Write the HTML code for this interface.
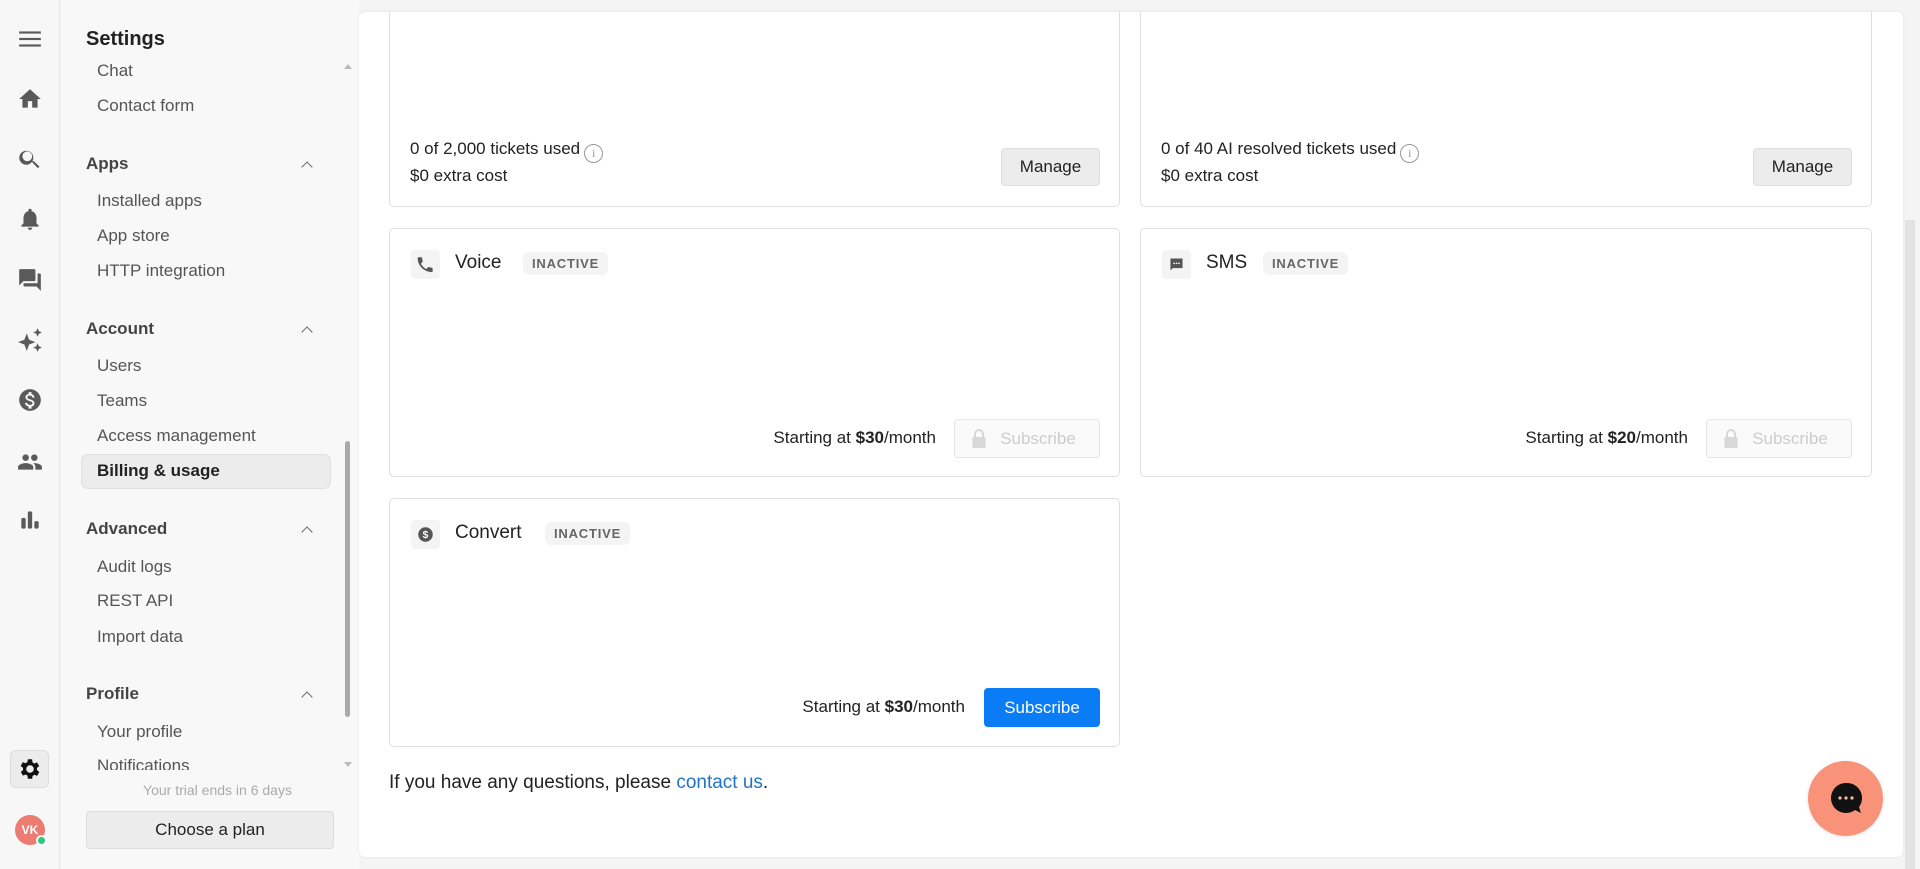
<!DOCTYPE html>
<html><head><meta charset="utf-8"><style>
*{box-sizing:border-box;margin:0;padding:0}
body{width:1920px;height:869px;overflow:hidden;background:#f4f4f4;font-family:"Liberation Sans",sans-serif;color:#222;position:relative}
.rail{position:absolute;left:0;top:0;width:60px;height:869px;background:#f7f7f7;border-right:1px solid #e6e6e6}
.rail svg{position:absolute;left:17px;width:26px;height:26px;fill:#5a5a5a}
.side{position:absolute;left:61px;top:0;width:298px;height:869px;background:#f8f8f8}
.side .t{position:absolute;font-size:17px;color:#555}
.side .h{position:absolute;left:86px;font-size:17px;font-weight:bold;color:#444}
.side .car{position:absolute;left:300px;width:8px;height:8px;border-left:1.6px solid #666;border-top:1.6px solid #666;transform:rotate(45deg)}
.main{position:absolute;left:359px;top:12px;width:1544px;height:845px;background:#fff;border-radius:6px;box-shadow:0 0 3px rgba(0,0,0,.08);overflow:hidden}
.card{position:absolute;background:#fff;border:1px solid #e0e0e0;border-radius:5px}
.txt{position:absolute;font-size:17px;color:#222}
.btn{position:absolute;border-radius:4px;font-size:17px;text-align:center}
.manage{background:#ececec;border:1px solid #dedede;color:#222;width:99px;height:38px;line-height:36px}
.dis{background:#fafafa;border:1px solid #e6e6e6;color:#ccc;width:146px;height:39px;line-height:37px;padding-left:22px}
.blue{background:#0a7cf5;color:#fff;width:116px;height:39px;line-height:39px}
.ibox{position:absolute;width:29px;height:29px;background:#f4f4f4;border-radius:4px}
.badge{position:absolute;background:#f4f4f4;border-radius:6px;font-size:13px;font-weight:bold;letter-spacing:.8px;color:#666;padding:4px 9px}
.name{position:absolute;font-size:19px;color:#222}
.info{display:inline-block;width:19px;height:19px;border:1.5px solid #999;border-radius:50%;font-size:12px;color:#999;text-align:center;line-height:16px;vertical-align:-3px;margin-left:4px;font-family:"Liberation Serif",serif}
</style></head><body>
<div class="rail">
<svg style="top:26px" viewBox="0 0 24 24"><rect x="2" y="5" width="20" height="2"/><rect x="2" y="11" width="20" height="2"/><rect x="2" y="17" width="20" height="2"/></svg>
<svg style="top:86px" viewBox="0 0 24 24"><path d="M12 3 2 12h3v8h5v-6h4v6h5v-8h3z"/></svg>
<svg style="top:146px" viewBox="0 0 24 24"><path d="M15.5 14h-.8l-.3-.3A6.5 6.5 0 1 0 14 14.4l.3.3v.8l5 5 1.5-1.5zm-6 0a4.5 4.5 0 1 1 0-9 4.5 4.5 0 0 1 0 9z"/></svg>
<svg style="top:206px" viewBox="0 0 24 24"><path d="M12 22a2 2 0 0 0 2-2h-4a2 2 0 0 0 2 2zm6-6v-5c0-3-1.6-5.6-4.5-6.3V4a1.5 1.5 0 0 0-3 0v.7C7.6 5.4 6 8 6 11v5l-2 2v1h16v-1z"/></svg>
<svg style="top:267px" viewBox="0 0 24 24"><path d="M21 6h-2v9H6v2c0 .6.4 1 1 1h11l4 4V7c0-.6-.4-1-1-1zm-4 6V3c0-.6-.4-1-1-1H3c-.6 0-1 .4-1 1v14l4-4h10c.6 0 1-.4 1-1z"/></svg>
<svg style="top:327px" viewBox="0 0 24 24"><path d="M9 6l2.2 5.8L17 14l-5.8 2.2L9 22l-2.2-5.8L1 14l5.8-2.2zM19 1l1.2 2.8L23 5l-2.8 1.2L19 9l-1.2-2.8L15 5l2.8-1.2zM19 15l1.2 2.8L23 19l-2.8 1.2L19 23l-1.2-2.8L15 19l2.8-1.2z"/></svg>
<svg style="top:387px" viewBox="0 0 24 24"><path d="M12 2a10 10 0 1 0 0 20 10 10 0 0 0 0-20zm1.4 16.1V20h-2.7v-1.9c-1.7-.4-3.2-1.5-3.3-3.4h2c.1 1 .8 1.8 2.6 1.8 1.9 0 2.3-1 2.3-1.5 0-.8-.4-1.5-2.5-2-2.4-.6-4-1.6-4-3.5 0-1.6 1.3-2.7 2.9-3V4.7h2.7v1.9c1.8.4 2.7 1.8 2.7 3.2h-2c-.1-1.1-.6-1.8-2.2-1.8-1.5 0-2.3.7-2.3 1.6 0 .8.6 1.3 2.5 1.8s4 1.3 4 3.7c0 1.7-1.3 2.7-2.7 3z"/></svg>
<svg style="top:449px" viewBox="0 0 24 24"><path d="M16 11a3 3 0 1 0 0-6 3 3 0 0 0 0 6zm-8 0a3 3 0 1 0 0-6 3 3 0 0 0 0 6zm0 2c-2.3 0-7 1.2-7 3.5V19h14v-2.5C15 14.2 10.3 13 8 13zm8 0h-1c1.2.8 2 2 2 3.5V19h6v-2.5c0-2.3-4.7-3.5-7-3.5z"/></svg>
<svg style="top:507px" viewBox="0 0 24 24"><rect x="4" y="10" width="4" height="10" rx="1.5"/><rect x="10" y="4" width="4" height="16" rx="1.5"/><rect x="16" y="13" width="4" height="7" rx="1.5"/></svg>
<div style="position:absolute;left:10px;top:750px;width:39px;height:38px;background:#ececec;border:1px solid #ddd;border-radius:6px"></div>
<svg style="top:756px;fill:#111" viewBox="0 0 24 24"><path d="M19.4 13a7.5 7.5 0 0 0 0-2l2.1-1.6-2-3.5-2.5 1a7.3 7.3 0 0 0-1.7-1L15 3h-4l-.4 2.7a7.3 7.3 0 0 0-1.7 1l-2.5-1-2 3.5L6.6 11a7.5 7.5 0 0 0 0 2l-2.1 1.6 2 3.5 2.5-1c.5.4 1.1.7 1.7 1L11 21h4l.4-2.7c.6-.3 1.2-.6 1.7-1l2.5 1 2-3.5zM13 15.5a3.5 3.5 0 1 1 0-7 3.5 3.5 0 0 1 0 7z" transform="translate(-1 0)"/></svg>
<div style="position:absolute;left:15px;top:815px;width:30px;height:30px;border-radius:50%;background:#ec7b72;color:#fff;font-size:12px;font-weight:bold;text-align:center;line-height:30px">VK</div>
<div style="position:absolute;left:36px;top:835px;width:11px;height:11px;border-radius:50%;background:#2dc67a;border:2px solid #f7f7f7"></div>
</div>
<div class="side">
<div style="position:absolute;left:25px;top:28px;font-size:20px;font-weight:bold;color:#222">Settings</div>
</div>
<div style="position:absolute;left:61px;top:0">
<div class="side" style="left:0;background:transparent">
<div class="t" style="left:36px;top:61px">Chat</div>
<div class="t" style="left:36px;top:96px">Contact form</div>
<div class="h" style="left:25px;top:154px">Apps</div><div class="car" style="left:242px;top:163px"></div>
<div class="t" style="left:36px;top:191px">Installed apps</div>
<div class="t" style="left:36px;top:226px">App store</div>
<div class="t" style="left:36px;top:261px">HTTP integration</div>
<div class="h" style="left:25px;top:319px">Account</div><div class="car" style="left:242px;top:328px"></div>
<div class="t" style="left:36px;top:356px">Users</div>
<div class="t" style="left:36px;top:391px">Teams</div>
<div class="t" style="left:36px;top:426px">Access management</div>
<div style="position:absolute;left:20px;top:454px;width:250px;height:35px;background:#ececec;border:1px solid #e0e0e0;border-radius:7px"></div>
<div class="t" style="left:36px;top:461px;color:#222;font-weight:bold">Billing &amp; usage</div>
<div class="h" style="left:25px;top:519px">Advanced</div><div class="car" style="left:242px;top:528px"></div>
<div class="t" style="left:36px;top:557px">Audit logs</div>
<div class="t" style="left:36px;top:591px">REST API</div>
<div class="t" style="left:36px;top:627px">Import data</div>
<div class="h" style="left:25px;top:684px">Profile</div><div class="car" style="left:242px;top:693px"></div>
<div class="t" style="left:36px;top:722px">Your profile</div>
<div style="position:absolute;left:0;top:752px;width:290px;height:18px;overflow:hidden"><div class="t" style="left:36px;top:4px">Notifications</div></div>
<div style="position:absolute;left:0;top:770px;width:298px;height:99px;background:#f8f8f8"></div>
<div style="position:absolute;left:0;width:298px;top:782px;text-align:center;font-size:14px;color:#aaa;padding-left:15px">Your trial ends in 6 days</div>
<div style="position:absolute;left:25px;top:811px;width:248px;height:38px;background:#ececec;border:1px solid #ddd;border-radius:4px;text-align:center;line-height:36px;font-size:17px;color:#222">Choose a plan</div>
<div style="position:absolute;left:283px;top:64px;border:4px solid transparent;border-bottom:5px solid #bbb;border-top:0"></div>
<div style="position:absolute;left:283px;top:762px;border:4px solid transparent;border-top:5px solid #bbb;border-bottom:0"></div>
<div style="position:absolute;left:284px;top:441px;width:5px;height:276px;background:#aaa;border-radius:3px"></div>
</div></div>
<div style="position:absolute;left:1905px;top:220px;width:10px;height:649px;background:#e2e2e2"></div>
<div class="main">
<div class="card" style="left:30px;top:-20px;width:731px;height:215px">
<div class="txt" style="left:20px;top:146px">0 of 2,000 tickets used<span class="info">i</span></div>
<div class="txt" style="left:20px;top:173px">$0 extra cost</div>
<div class="btn manage" style="left:611px;top:155px">Manage</div>
</div>
<div class="card" style="left:781px;top:-20px;width:732px;height:215px">
<div class="txt" style="left:20px;top:146px">0 of 40 AI resolved tickets used<span class="info">i</span></div>
<div class="txt" style="left:20px;top:173px">$0 extra cost</div>
<div class="btn manage" style="left:612px;top:155px">Manage</div>
</div>
<div class="card" style="left:30px;top:216px;width:731px;height:249px">
<div class="ibox" style="left:21px;top:21px"><svg width="29" height="29" viewBox="0 0 24 24"><path fill="#555" d="M8.2 11.4a10.6 10.6 0 0 0 4.4 4.4l1.5-1.5c.2-.2.5-.2.7-.1.8.3 1.6.4 2.4.4.4 0 .7.3.7.7v2.3c0 .4-.3.7-.7.7A11.7 11.7 0 0 1 5.5 6.7c0-.4.3-.7.7-.7h2.4c.4 0 .7.3.7.7 0 .8.1 1.7.4 2.4.1.3 0 .5-.2.7z"/></svg></div>
<div class="name" style="left:65px;top:23px">Voice</div>
<div class="badge" style="left:133px;top:23px">INACTIVE</div>
<div class="txt" style="right:183px;top:199px">Starting at <b>$30</b>/month</div>
<div class="btn dis" style="left:564px;top:190px"><svg style="position:absolute;left:16px;top:9px" width="16" height="20" viewBox="0 0 16 20"><path fill="#d8d8d8" d="M3 8V5a5 5 0 0 1 10 0v3h1.5v11h-13V8zm2 0h6V5a3 3 0 0 0-6 0z"/></svg>Subscribe</div>
</div>
<div class="card" style="left:781px;top:216px;width:732px;height:249px">
<div class="ibox" style="left:21px;top:21px"><svg width="29" height="29" viewBox="0 0 24 24"><path fill="#555" d="M7 7h10v8H9l-2 2z"/><circle cx="10" cy="11" r=".7" fill="#fff"/><circle cx="12" cy="11" r=".7" fill="#fff"/><circle cx="14" cy="11" r=".7" fill="#fff"/></svg></div>
<div class="name" style="left:65px;top:23px">SMS</div>
<div class="badge" style="left:122px;top:23px">INACTIVE</div>
<div class="txt" style="right:183px;top:199px">Starting at <b>$20</b>/month</div>
<div class="btn dis" style="left:565px;top:190px"><svg style="position:absolute;left:16px;top:9px" width="16" height="20" viewBox="0 0 16 20"><path fill="#d8d8d8" d="M3 8V5a5 5 0 0 1 10 0v3h1.5v11h-13V8zm2 0h6V5a3 3 0 0 0-6 0z"/></svg>Subscribe</div>
</div>
<div class="card" style="left:30px;top:486px;width:731px;height:249px">
<div class="ibox" style="left:21px;top:21px"><svg width="29" height="29" viewBox="0 0 24 24"><circle cx="12" cy="12" r="6" fill="#555"/><text x="12" y="15" font-size="8.5" font-weight="bold" fill="#fff" text-anchor="middle" font-family="Liberation Sans">$</text></svg></div>
<div class="name" style="left:65px;top:23px">Convert</div>
<div class="badge" style="left:155px;top:23px">INACTIVE</div>
<div class="txt" style="right:154px;top:198px">Starting at <b>$30</b>/month</div>
<div class="btn blue" style="left:594px;top:189px">Subscribe</div>
</div>
<div class="txt" style="left:30px;top:760px;font-size:19px">If you have any questions, please <span style="color:#1f75c4">contact us</span>.</div>
</div>
<div style="position:absolute;left:1808px;top:761px;width:75px;height:75px;border-radius:50%;background:#f8937a;box-shadow:0 1px 4px rgba(0,0,0,.1)"></div>
<svg style="position:absolute;left:1828px;top:781px" width="36" height="36" viewBox="0 0 36 36"><path fill="#111" d="M18 2a15 15 0 1 0 9 27l6 3-2-6A15 15 0 0 0 18 2z"/><circle cx="12" cy="17" r="1.6" fill="#f5c1a8"/><circle cx="18" cy="17" r="1.6" fill="#f5c1a8"/><circle cx="24" cy="17" r="1.6" fill="#f5c1a8"/></svg>
</body></html>
